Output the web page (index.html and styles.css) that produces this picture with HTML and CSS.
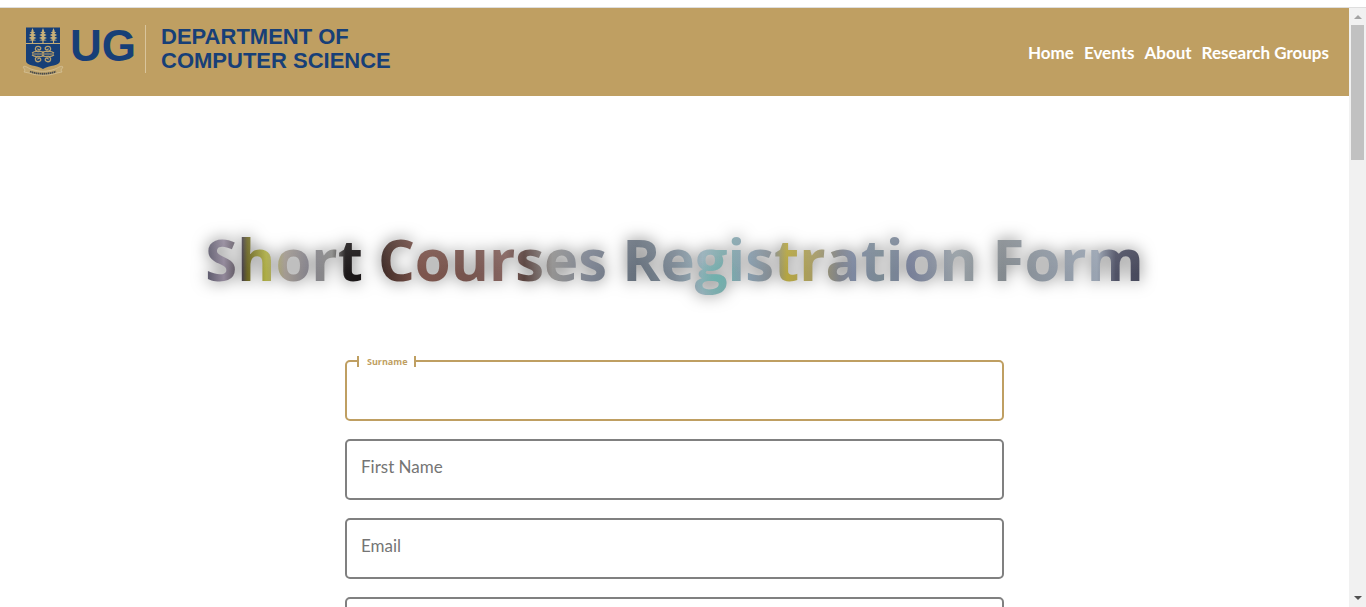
FILE: index.html
```html
<!DOCTYPE html>
<html lang="en">
<head>
<meta charset="utf-8">
<meta name="viewport" content="width=device-width, initial-scale=1">
<title>Short Courses Registration Form</title>
<link rel="stylesheet" href="styles.css">
</head>
<body>
<div class="frame">
  <div class="page">
    <header class="site-header">
      <a class="brand" href="#">
        <svg class="crest" viewBox="0 0 42 50" width="42" height="50" aria-hidden="true">
          <defs>
            <g id="tree" fill="#c8b078">
              <path d="M0-1 1.200 2 .8 2.400 2.800 3.500 .9 4.600 3.600 6 .9 7.400 4 9 .9 10.200 3.800 11.300 .6 11.800V14.500H-.6V11.800L-3.800 11.300-.9 10.200-4 9-.9 7.400-3.600 6-.9 4.600-2.800 3.500-.8 2.400-1.200 2Z"/>
            </g>
            <g id="scroll" fill="none" stroke="#b9a06c" stroke-width="1.300">
              <path d="M0-1C1-3 2-2.500 4-2.500C7-2.500 8-4 7.500-6C7-8.300 3-8.300 2.200-6C2-3.800 5-3.500 5.300-5.500M5-2.500C8-3 9-2.500 11-1"/>
            </g>
          </defs>
          <path d="M4 0.500H38V34C38 39 27 38 21 42C15 38 4 39 4 34Z" fill="#173f77"/>
          <use href="#tree" x="10.500" y="2"/>
          <use href="#tree" x="21" y="2"/>
          <use href="#tree" x="31.500" y="2"/>
          <path d="M4 16.500H38" stroke="#c3ab77"/>
          <g transform="translate(21 27)">
            <use href="#scroll"/>
            <use href="#scroll" transform="scale(-1 1)"/>
            <use href="#scroll" transform="scale(1 -1)"/>
            <use href="#scroll" transform="scale(-1 -1)"/>
            <path d="M-11 0H11M0-3V3" stroke="#b9a06c"/>
          </g>
          <path d="M1 40C3 38 6 41 9 42C17 45 25 45 33 42C36 41 39 38 41 40L39 43 40 45 35 46C26 49 16 49 7 46L2 45 3 43Z" fill="#c4a86f" stroke="#dac9a5" stroke-width=".6"/>
          <path d="M8 44.500C16 47.500 26 47.500 34 44.500" fill="none" stroke="#4a4c4c" stroke-width="1.800" stroke-dasharray="1.500 .5"/>
        </svg>
        <span class="brand-short">UG</span>
        <span class="brand-name">DEPARTMENT OF<br>COMPUTER SCIENCE</span>
      </a>
      <nav class="site-nav">
        <a href="#">Home</a>
        <a href="#">Events</a>
        <a href="#">About</a>
        <a href="#">Research Groups</a>
      </nav>
    </header>
    <main class="content">
      <h1 class="title">Short Courses Registration Form</h1>
      <form class="form">
        <div class="field field-active">
          <input id="surname" type="text">
          <label for="surname">Surname</label>
        </div>
        <div class="field">
          <input id="first-name" type="text">
          <label for="first-name">First Name</label>
        </div>
        <div class="field">
          <input id="email" type="email">
          <label for="email">Email</label>
        </div>
        <div class="field">
          <input id="phone" type="tel" aria-label="Phone">
        </div>
      </form>
    </main>
  </div>
  <div class="scrollbar" aria-hidden="true">
    <span class="arrow arrow-up"></span>
    <span class="thumb"></span>
    <span class="arrow arrow-down"></span>
  </div>
</div>
</body>
</html>
```
FILE: styles.css
```css
* { box-sizing: border-box; }

body {
  margin: 0;
  height: 100vh;
  padding-top: 7px;
  overflow: hidden;
  background: #fff;
  font-family: Lato, "Gill Sans", sans-serif;
}

.frame {
  display: flex;
  height: 100%;
  border-top: 1px solid #dedede;
}

.page {
  flex: 1;
  min-width: 0;
  overflow: hidden;
}

.site-header {
  display: flex;
  justify-content: space-between;
  padding: 17px 20px 19px 22px;
  background: #bf9f62;
}

.brand {
  display: flex;
  align-items: flex-start;
  color: #173f77;
  font-family: "Liberation Sans", Arial, sans-serif;
  font-weight: 700;
  text-decoration: none;
}

.crest {
  margin-top: 2px;
}

.brand-short {
  margin-left: 6px;
  font-size: 44px;
  line-height: 42px;
}

.brand-name {
  margin-left: 9px;
  padding-left: 15px;
  border-left: 1px solid #d9c59c;
  font-size: 22px;
  line-height: 24px;
}

.site-nav {
  display: flex;
  align-items: center;
  gap: 10px;
  padding-top: 4px;
}

.site-nav a {
  color: #fff;
  font-size: 17px;
  font-weight: 700;
  line-height: 20px;
  text-decoration: none;
}

.content {
  padding: 123px 20px 0;
}

.title {
  width: fit-content;
  margin: 0 auto;
  font-family: "Open Sans", "Noto Sans", sans-serif;
  font-size: 58px;
  font-weight: 700;
  line-height: 80px;
  white-space: nowrap;
  color: transparent;
  background:
    radial-gradient(ellipse 24px 22px at 54.500% 74%, #6fb0ac, transparent),
    linear-gradient(to bottom, rgba(255, 255, 255, .12) 20%, transparent 70%),
    linear-gradient(to right,
      #565466 0%, #92889a 2%, #484248 4%, #6a6424 4.500%, #aeae46 6.500%,
      #a39b92 8.500%, #84828b 11%, #8b8b89 13.500%, #1d191a 15%, #191516 17%,
      #4a322c 19.500%, #7d554d 23%, #76544e 28%, #856460 32%, #5a4440 34%,
      #949392 37%, #7d8492 41%, #66707c 46%, #7d8995 50%, #98b0ba 53%,
      #7eaaab 55%, #879cac 58%, #858b90 60.500%, #b5a540 62%, #a69b66 65%,
      #808389 67.500%, #7d88a0 69%, #7b8a94 72%, #777f98 75%, #979fa5 80%,
      #848a8f 85%, #8f98a3 90%, #9aa4b2 95%, #505266 97%, #46485a 100%);
  -webkit-background-clip: text;
  background-clip: text;
  filter: drop-shadow(0 0 8px rgba(0, 0, 0, .5));
}

.form {
  display: flex;
  flex-direction: column;
  gap: 18px;
  max-width: 659px;
  margin: 61px auto 0;
}

.field {
  position: relative;
  height: 61px;
}

.field input {
  width: 100%;
  height: 100%;
  padding: 0 14px;
  border: 2px solid #808080;
  border-radius: 5px;
  outline: 0;
  background: #fff;
  font: inherit;
}

.field label {
  position: absolute;
  top: 18px;
  left: 16px;
  color: #757575;
  font-size: 17px;
  line-height: 20px;
}

.field-active input {
  border-color: #bf9f62;
}

.field-active label {
  top: -4px;
  left: 12px;
  padding: 0 7px 0 8px;
  border: solid #bf9f62;
  border-width: 0 2px;
  background: #fff;
  color: #bf9f62;
  font-family: "Open Sans", sans-serif;
  font-size: 9px;
  font-weight: 700;
  line-height: 11px;
}

.scrollbar {
  display: flex;
  flex-direction: column;
  align-items: center;
  width: 17px;
  padding: 7px 0;
  background: #f1f1f1;
}

.arrow {
  border: 4px solid transparent;
}

.arrow-up {
  border-top: 0;
  border-bottom-color: #a3a3a3;
}

.arrow-down {
  margin-top: auto;
  border-bottom: 0;
  border-top-color: #505050;
}

.thumb {
  width: 13px;
  height: 135px;
  margin-top: 6px;
  background: #c1c1c1;
}
```
